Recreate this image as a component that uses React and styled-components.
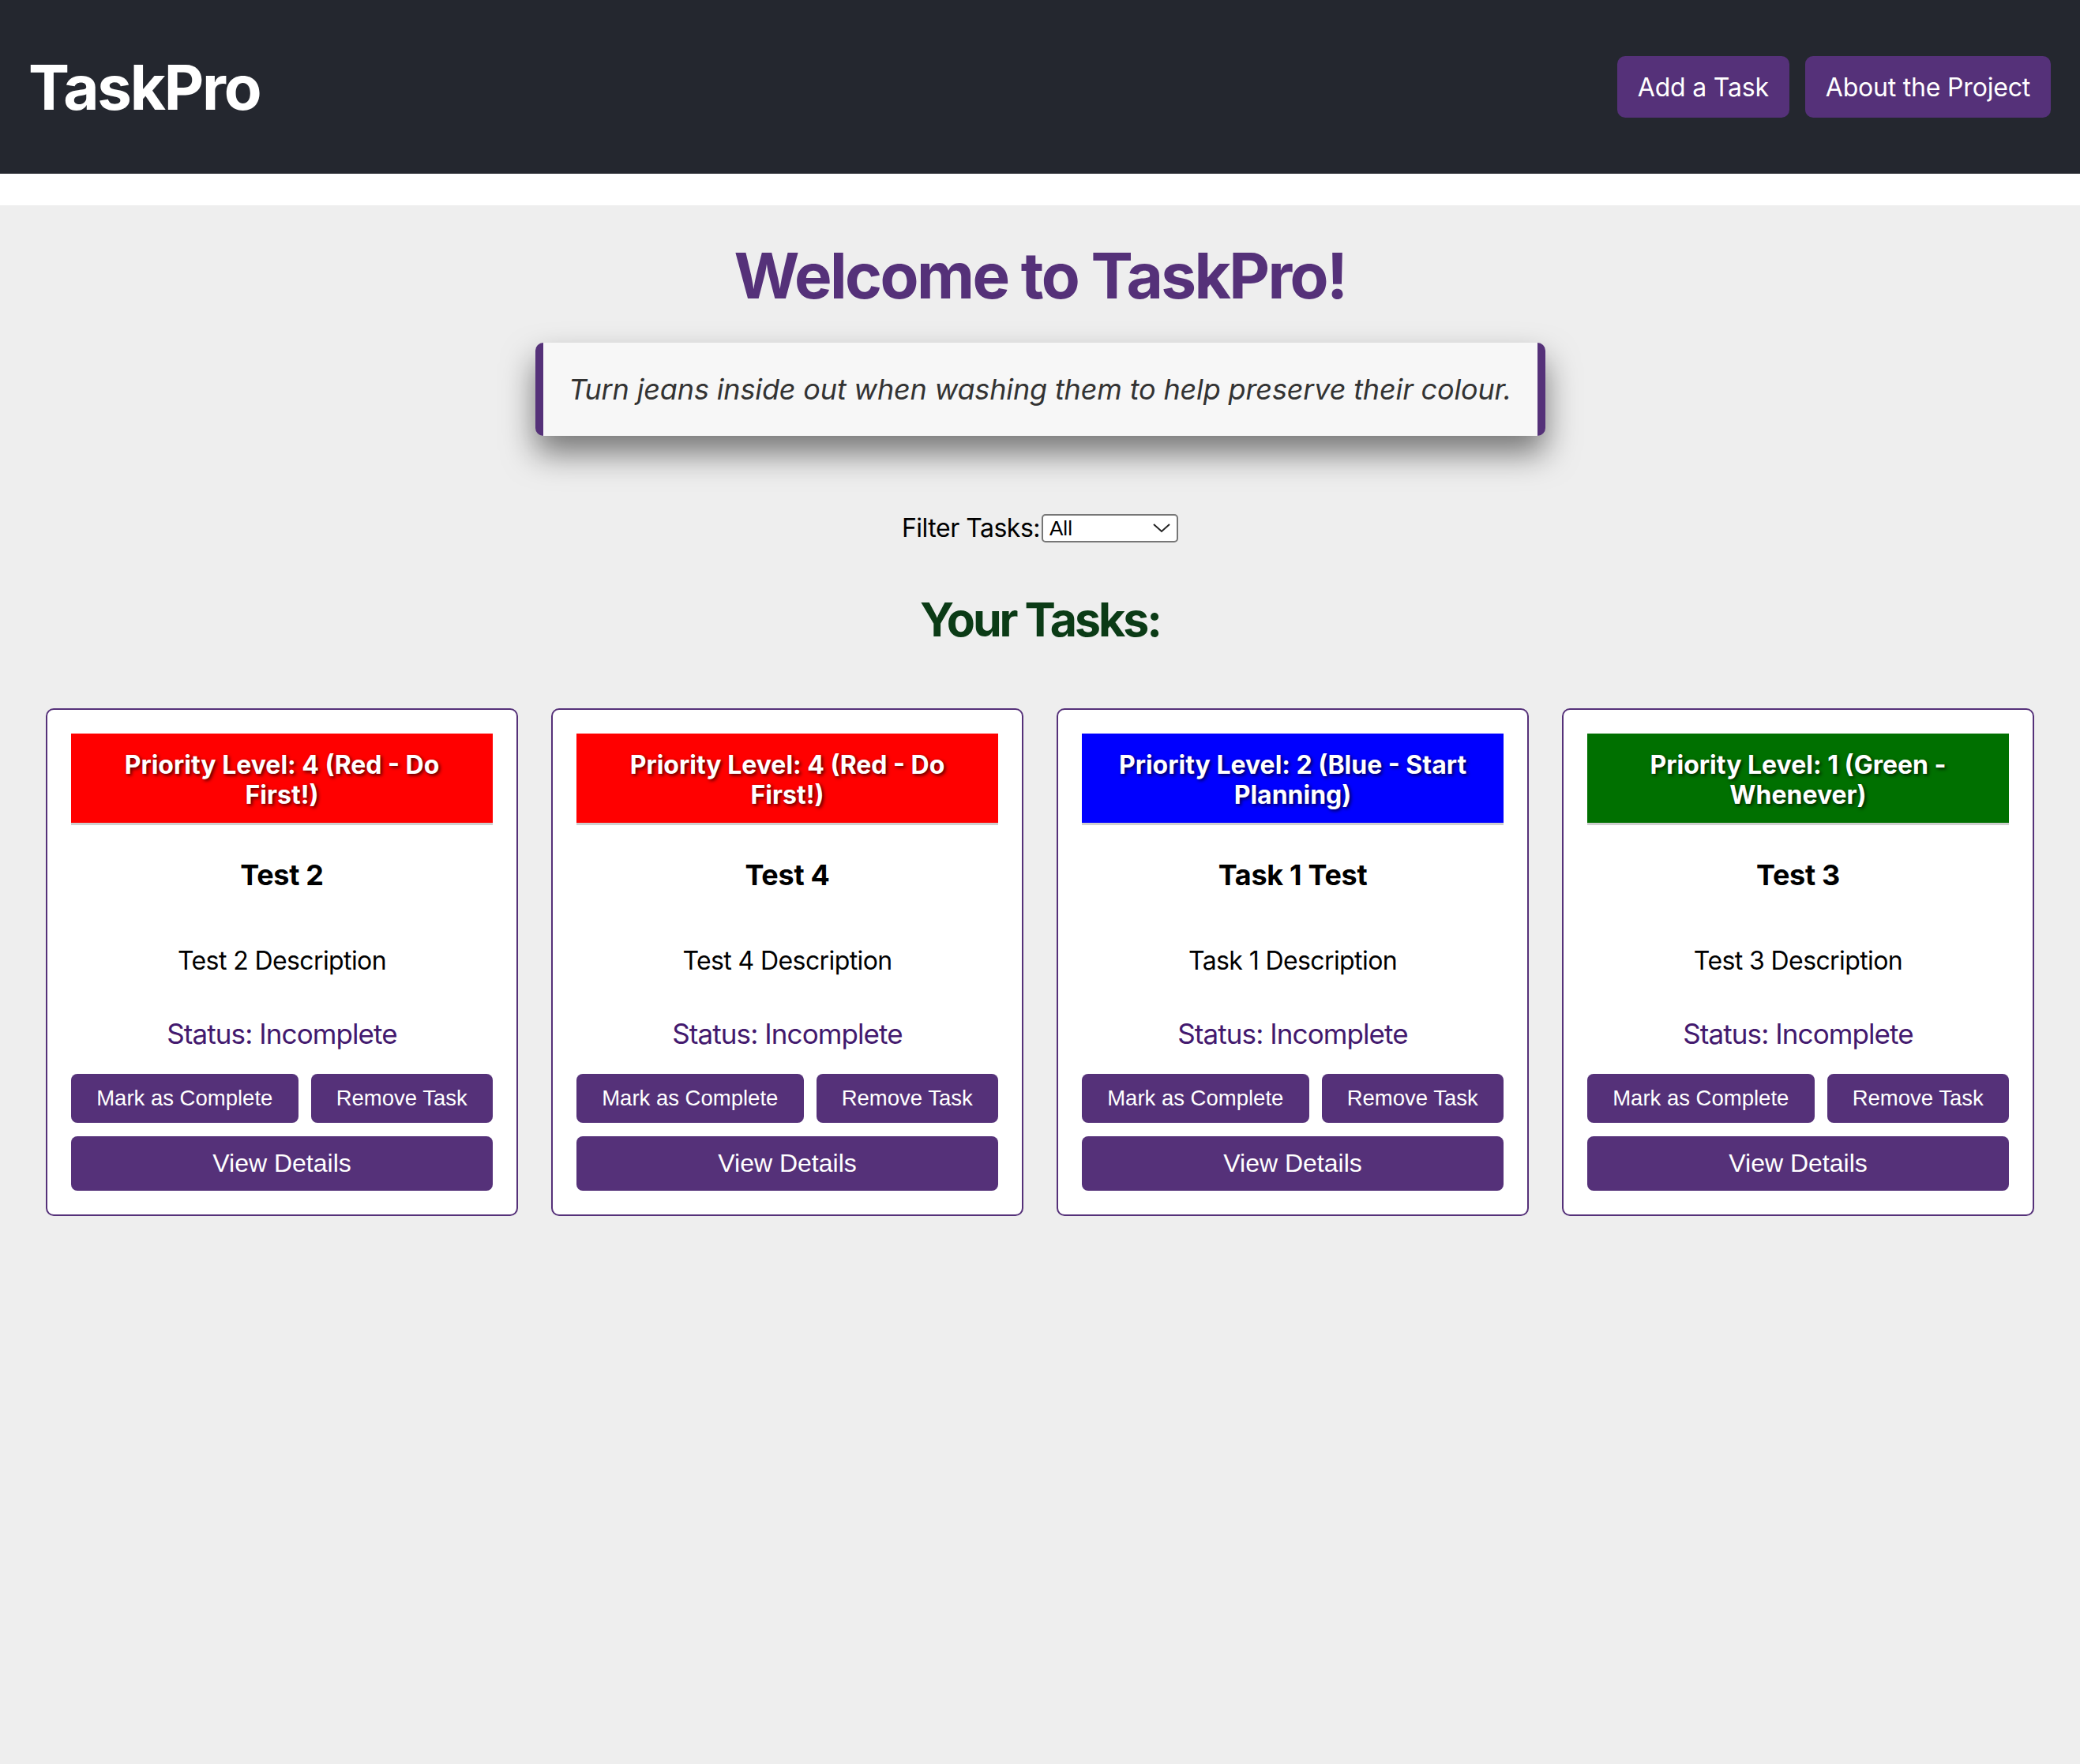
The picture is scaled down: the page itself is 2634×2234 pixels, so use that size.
import React from "react";
import styled, { createGlobalStyle } from "styled-components";

const GlobalStyle = createGlobalStyle`
  html, body {
    margin: 0;
    padding: 0;
    background: #ffffff;
    font-family: Inter, "Noto Sans", sans-serif;
  }
  * {
    box-sizing: border-box;
  }
`;

const purple = "#553179";

const Header = styled.header`
  height: 220px;
  background: #24272f;
  display: flex;
  align-items: center;
  justify-content: space-between;
  padding: 0 37px 0 36px;
`;

const Logo = styled.h1`
  margin: 0;
  color: #ffffff;
  font-size: 78px;
  font-weight: 700;
  letter-spacing: -2.2px;
`;

const NavButtons = styled.nav`
  display: flex;
  gap: 20px;
`;

const NavButton = styled.button`
  height: 78px;
  padding: 0 26px;
  border: none;
  border-radius: 10px;
  background: ${purple};
  color: #ffffff;
  font-family: Inter, sans-serif;
  font-size: 32px;
  letter-spacing: -0.2px;
  cursor: pointer;
`;

const Main = styled.main`
  margin-top: 40px;
  background: #eeeeee;
  min-height: 1974px;
  padding: 41px 58px 60px;
  display: flex;
  flex-direction: column;
  align-items: center;
`;

const Welcome = styled.h2`
  margin: 0;
  font-size: 80px;
  line-height: 96px;
  font-weight: 700;
  color: ${purple};
  letter-spacing: -2.6px;
`;

const Tip = styled.div`
  margin-top: 37px;
  width: 1279px;
  padding: 37px 32px;
  background: #f7f7f7;
  border-left: 10px solid ${purple};
  border-right: 10px solid ${purple};
  border-radius: 10px;
  box-shadow: 0 22px 40px rgba(0, 0, 0, 0.5);
  font-size: 36px;
  line-height: 44px;
  font-style: italic;
  letter-spacing: -0.15px;
  color: #333333;
  text-align: center;
  white-space: nowrap;
`;

const FilterRow = styled.div`
  margin-top: 97px;
  display: flex;
  align-items: center;
  font-size: 32px;
  line-height: 40px;
  letter-spacing: -0.5px;
  color: #000000;
`;

const SelectWrap = styled.div`
  position: relative;
  margin-left: 2px;
  display: flex;
`;

const FilterSelect = styled.select`
  appearance: none;
  width: 173px;
  height: 36px;
  padding: 0 40px 0 8px;
  border: 2px solid #767676;
  border-radius: 5px;
  background: #ffffff;
  font-family: "Liberation Sans", Arial, sans-serif;
  font-size: 26px;
  letter-spacing: 0;
  color: #000000;
`;

const Chevron = styled.svg`
  position: absolute;
  right: 10px;
  top: 12px;
  pointer-events: none;
`;

const TasksTitle = styled.h2`
  margin: 60px 0 0;
  font-size: 59px;
  line-height: 72px;
  font-weight: 700;
  letter-spacing: -3px;
  color: #0b3b16;
`;

const CardGrid = styled.div`
  margin-top: 76px;
  width: 100%;
  display: grid;
  grid-template-columns: repeat(4, 598px);
  justify-content: space-between;
`;

const Card = styled.div`
  background: #ffffff;
  border: 2px solid ${purple};
  border-radius: 10px;
  padding: 30px;
  display: flex;
  flex-direction: column;
  align-items: stretch;
  text-align: center;
`;

const PriorityBanner = styled.div`
  background: ${(p) => p.color};
  border-bottom: 3px solid #cfcfcf;
  padding: 21px 20px 16px;
  color: #ffffff;
  font-size: 32px;
  line-height: 38px;
  font-weight: 700;
  text-shadow: 2px 2px 4px rgba(0, 0, 0, 0.7);
`;

const TaskTitle = styled.h3`
  margin: 41px 0 0;
  font-size: 36px;
  line-height: 44px;
  font-weight: 700;
  letter-spacing: -0.3px;
  color: #000000;
`;

const TaskDescription = styled.p`
  margin: 67px 0 0;
  font-size: 32px;
  line-height: 40px;
  letter-spacing: -0.6px;
  color: #000000;
`;

const TaskStatus = styled.p`
  margin: 50px 0 0;
  font-size: 35px;
  line-height: 44px;
  letter-spacing: -0.9px;
  color: #43196e;
`;

const ActionRow = styled.div`
  margin-top: 29px;
  display: flex;
  gap: 16px;
`;

const CardButton = styled.button`
  flex: 1 1 auto;
  height: ${(p) => (p.wide ? "69px" : "62px")};
  padding: 0 30px;
  border: none;
  border-radius: 8px;
  background: ${purple};
  color: #ffffff;
  font-family: "Liberation Sans", Arial, sans-serif;
  font-size: ${(p) => (p.wide ? "32px" : "27.5px")};
  cursor: pointer;
`;

const DetailsButton = styled(CardButton)`
  margin-top: 17px;
  width: 100%;
`;

const tasks = [
  {
    title: "Test 2",
    description: "Test 2 Description",
    priority: "Priority Level: 4 (Red - Do First!)",
    color: "#ff0000",
  },
  {
    title: "Test 4",
    description: "Test 4 Description",
    priority: "Priority Level: 4 (Red - Do First!)",
    color: "#ff0000",
  },
  {
    title: "Task 1 Test",
    description: "Task 1 Description",
    priority: "Priority Level: 2 (Blue - Start Planning)",
    color: "#0000ff",
  },
  {
    title: "Test 3",
    description: "Test 3 Description",
    priority: "Priority Level: 1 (Green - Whenever)",
    color: "#007000",
  },
];

const TaskCard = ({ task }) => (
  <Card>
    <PriorityBanner color={task.color}>{task.priority}</PriorityBanner>
    <TaskTitle>{task.title}</TaskTitle>
    <TaskDescription>{task.description}</TaskDescription>
    <TaskStatus>Status: Incomplete</TaskStatus>
    <ActionRow>
      <CardButton>Mark as Complete</CardButton>
      <CardButton>Remove Task</CardButton>
    </ActionRow>
    <DetailsButton wide>View Details</DetailsButton>
  </Card>
);

export default function App() {
  return (
    <>
      <GlobalStyle />
      <Header>
        <Logo>TaskPro</Logo>
        <NavButtons>
          <NavButton>Add a Task</NavButton>
          <NavButton>About the Project</NavButton>
        </NavButtons>
      </Header>
      <Main>
        <Welcome>Welcome to TaskPro!</Welcome>
        <Tip>Turn jeans inside out when washing them to help preserve their colour.</Tip>
        <FilterRow>
          Filter Tasks:
          <SelectWrap>
            <FilterSelect defaultValue="all">
              <option value="all">All</option>
              <option value="incomplete">Incomplete</option>
              <option value="complete">Complete</option>
            </FilterSelect>
            <Chevron width="22" height="12" viewBox="0 0 22 12">
              <path d="M1 1 L11 10 L21 1" fill="none" stroke="#222" strokeWidth="2" />
            </Chevron>
          </SelectWrap>
        </FilterRow>
        <TasksTitle>Your Tasks:</TasksTitle>
        <CardGrid>
          {tasks.map((task) => (
            <TaskCard key={task.title} task={task} />
          ))}
        </CardGrid>
      </Main>
    </>
  );
}
